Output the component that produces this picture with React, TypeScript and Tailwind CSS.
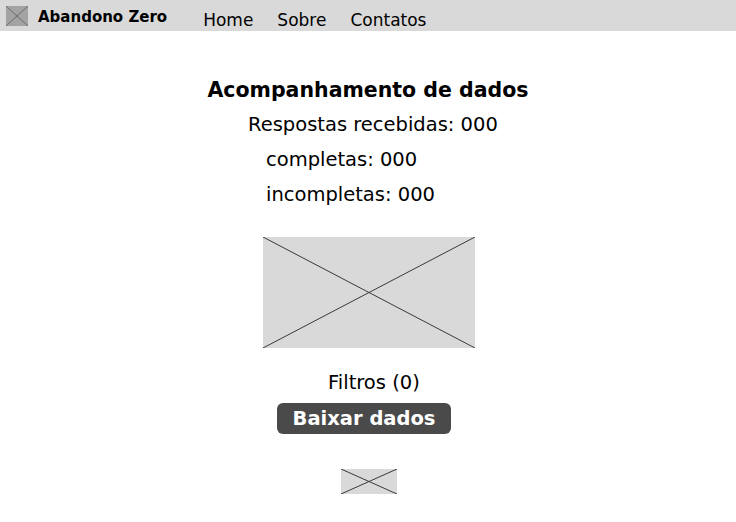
import React from "react";

const Placeholder = ({ className, fill = "#d9d9d9", stroke = "#3a3a3a" }: { className: string; fill?: string; stroke?: string }) => (
    <svg className={className} viewBox="0 0 100 100" preserveAspectRatio="none">
        <rect x="0" y="0" width="100" height="100" fill={fill} />
        <line x1="0" y1="0" x2="100" y2="100" stroke={stroke} strokeWidth="1" vectorEffect="non-scaling-stroke" />
        <line x1="100" y1="0" x2="0" y2="100" stroke={stroke} strokeWidth="1" vectorEffect="non-scaling-stroke" />
    </svg>
);

export default function App() {
    return (
        <div className="min-h-[522px] bg-white text-black font-['DejaVu_Sans',sans-serif]">
            <header className="flex items-center h-[31px] bg-[#d9d9d9] pl-[6px]">
                <Placeholder className="w-[22px] h-[20px]" fill="#a3a3a3" stroke="#6b6b6b" />
                <span className="ml-[10px] pt-[4px] text-[15px] font-bold">Abandono Zero</span>
                <nav className="flex ml-[36px] pt-[10px] gap-[24px] text-[17px]">
                    <a>Home</a>
                    <a>Sobre</a>
                    <a>Contatos</a>
                </nav>
            </header>

            <main className="mx-auto w-[340px] pt-[45px]">
                <h1 className="text-center text-[20.5px] font-bold leading-[28px]">Acompanhamento de dados</h1>
                <p className="pl-[50px] mt-[7px] text-[19.5px] leading-[28px]">Respostas recebidas: 000</p>
                <p className="pl-[68px] mt-[7px] text-[19.5px] leading-[28px]">completas: 000</p>
                <p className="pl-[68px] mt-[7px] text-[19.5px] leading-[28px]">incompletas: 000</p>

                <Placeholder className="block ml-[65px] mt-[28px] w-[212px] h-[111px]" />

                <p className="pl-[130px] mt-[21px] text-[19.5px] leading-[28px]">Filtros (0)</p>
                <div className="ml-[79px] mt-[6px] w-[174px] h-[31px] rounded-[6px] bg-[#4a4a4a] flex items-center justify-center">
                    <span className="text-white text-[19.5px] font-bold">Baixar dados</span>
                </div>

                <Placeholder className="block ml-[143px] mt-[35px] w-[56px] h-[25px]" />
            </main>
        </div>
    );
}
